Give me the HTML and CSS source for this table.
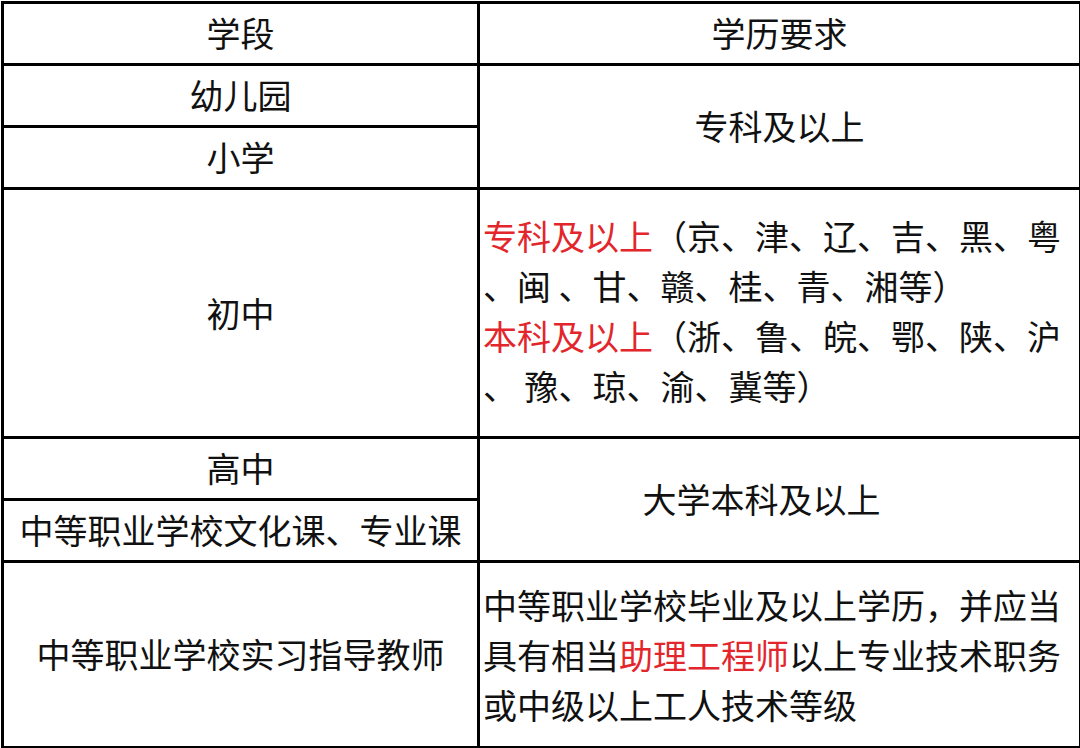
FILE: index.html
```html
<!DOCTYPE html>
<html lang="zh-CN">
<head>
<meta charset="utf-8">
<title>学历要求</title>
<link rel="stylesheet" href="styles.css">
</head>
<body>
<table class="req">
  <colgroup><col class="c1"><col class="c2"></colgroup>
  <tr class="r-head"><td class="stage">学段</td><td class="stage">学历要求</td></tr>
  <tr class="r-s"><td class="stage">幼儿园</td><td class="stage" rowspan="2">专科及以上</td></tr>
  <tr class="r-s"><td class="stage">小学</td></tr>
  <tr class="r-mid"><td class="stage">初中</td>
    <td class="desc desc-mid"><span class="red">专科及以上</span>（京、津、辽、吉、黑、粤<br>、闽 、甘、赣、桂、青、湘等）<br><span class="red">本科及以上</span>（浙、鲁、皖、鄂、陕、沪<br>、 豫、琼、渝、冀等）</td></tr>
  <tr class="r-s"><td class="stage">高中</td><td class="stage offset" rowspan="2">大学本科及以上</td></tr>
  <tr class="r-s"><td class="stage">中等职业学校文化课、专业课</td></tr>
  <tr class="r-last"><td class="stage">中等职业学校实习指导教师</td>
    <td class="desc">中等职业学校毕业及以上学历，并应当<br>具有相当<span class="red">助理工程师</span>以上专业技术职务<br>或中级以上工人技术等级</td></tr>
</table>
</body>
</html>
```
FILE: styles.css
```css
html, body {
  margin: 0;
  padding: 0;
  background: #fff;
}
body {
  width: 1080px;
  height: 748px;
  overflow: hidden;
}
.req {
  border-collapse: collapse;
  table-layout: fixed;
  width: 1080px;
  margin: 1px 0 0 1px;
  font-family: "Noto Sans CJK SC", "Noto Sans", sans-serif;
  font-size: 34px;
  color: #111;
}
.c1 { width: 476px; }
.c2 { width: 602px; }
.req td {
  border: 3px solid #000;
  padding: 0;
  vertical-align: middle;
}
.stage {
  text-align: center;
  line-height: 1.3;
  white-space: nowrap;
}
.req .offset {
  padding-right: 36px;
}
.req .desc {
  text-align: left;
  padding: 0 0 0 3px;
  line-height: 50px;
  white-space: nowrap;
}
.req .desc-mid {
  padding-bottom: 4px;
}
.red { color: #e3262b; }
.r-head { height: 62px; }
.r-s { height: 62px; }
.r-mid { height: 249px; }
.r-last { height: 186px; }
```
